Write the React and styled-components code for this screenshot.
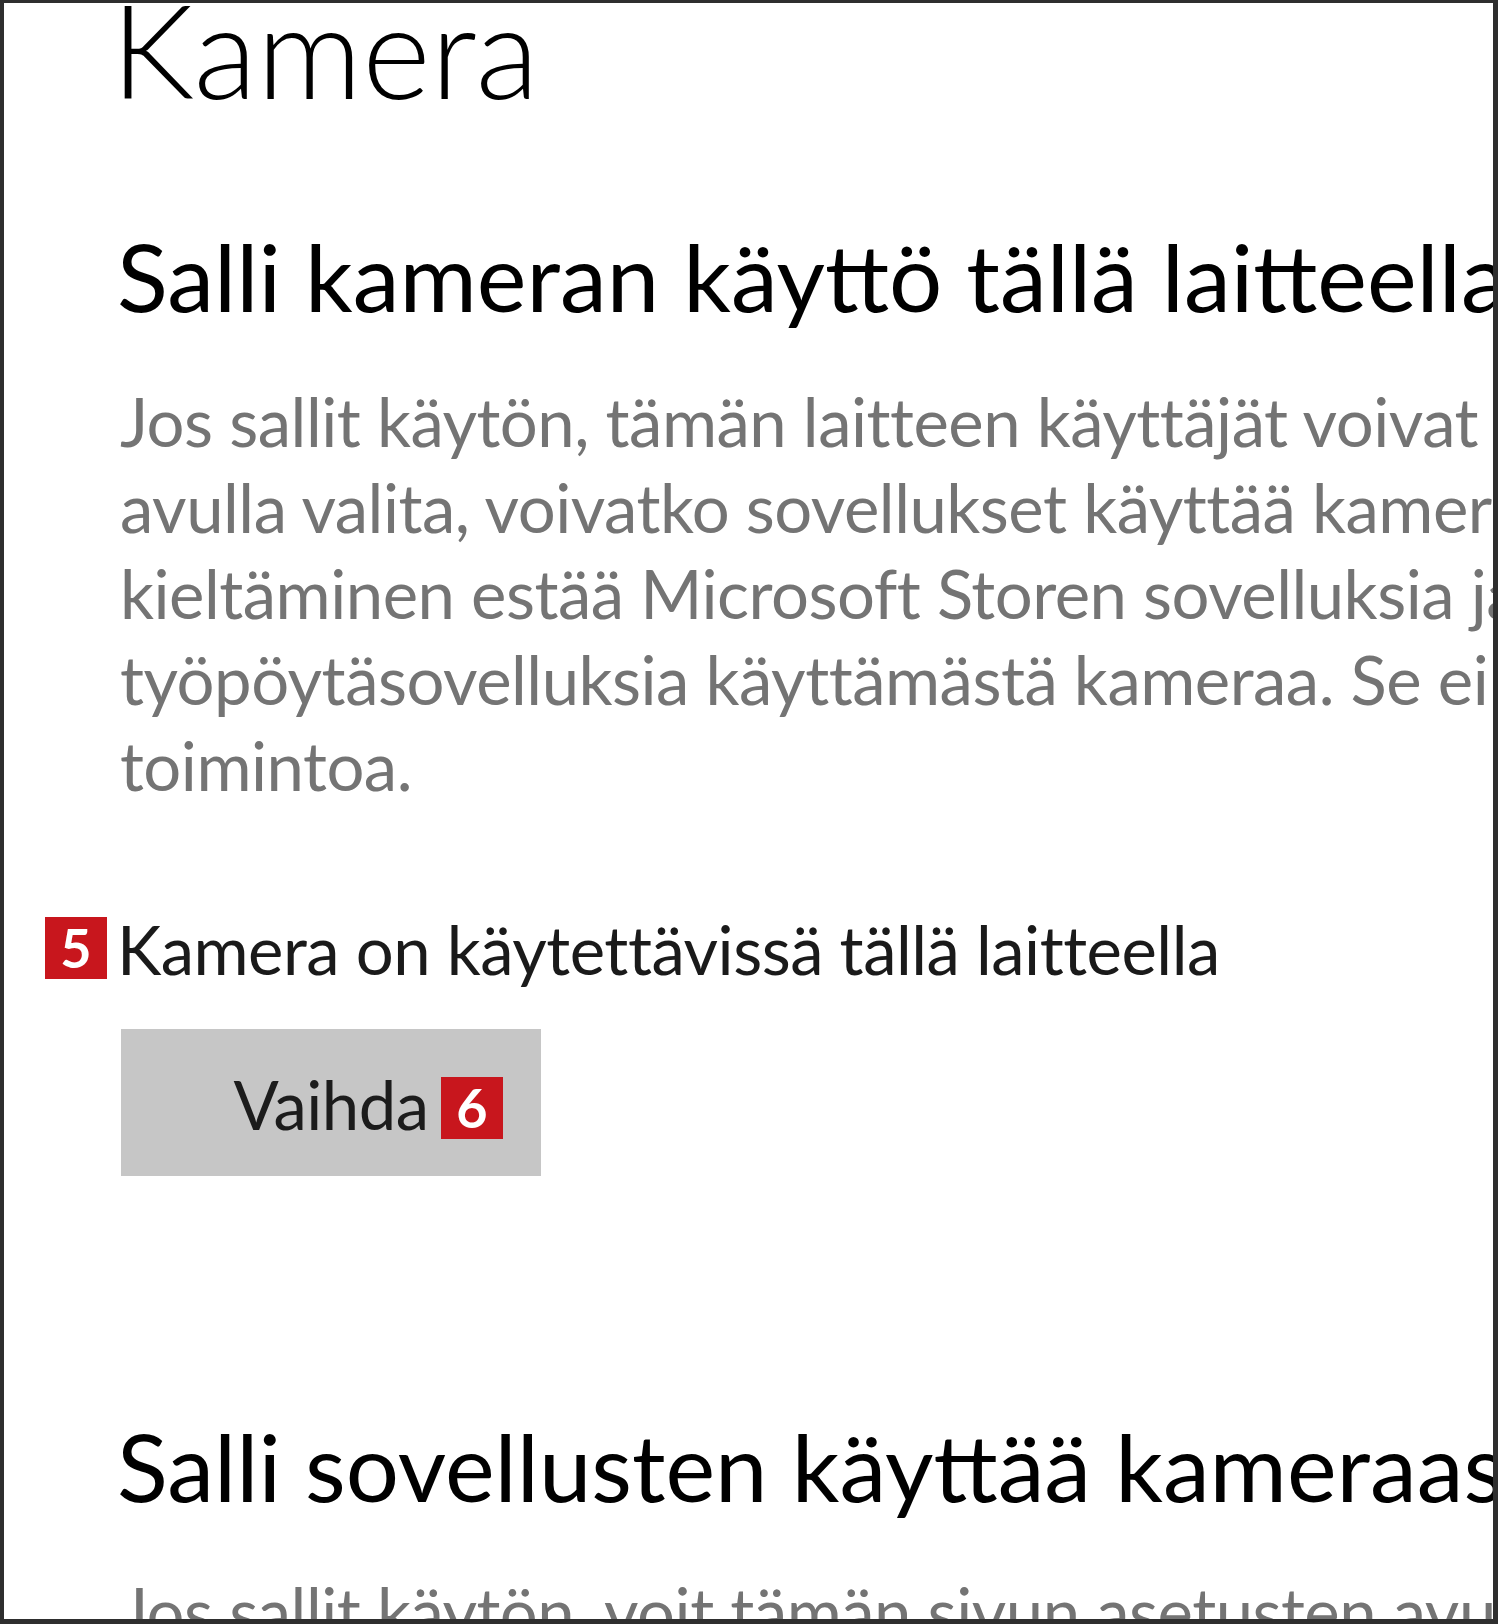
import React from "react";
import styled, { createGlobalStyle } from "styled-components";

const Global = createGlobalStyle`
  html, body { margin: 0; padding: 0; background: #ffffff; }
  body { font-family: Lato, "Open Sans", sans-serif; }
`;

const Frame = styled.div`
  box-sizing: border-box;
  width: 1498px;
  height: 1624px;
  border-style: solid;
  border-color: #2e2e2e;
  border-width: 3px 5px 5px 4px;
  background: #ffffff;
  overflow: hidden;
  padding-left: 113px;
`;

const Title = styled.h1`
  margin: 0 0 0 -6px;
  font-family: Lato, sans-serif;
  font-weight: 300;
  font-size: 131px;
  line-height: 92px;
  color: #000;
  white-space: nowrap;
`;

const Heading = styled.h2`
  margin: ${(p) => p.$top}px 0 0 0;
  font-family: Lato, sans-serif;
  font-weight: 400;
  font-size: 94px;
  line-height: 120px;
  color: #000;
  white-space: nowrap;
`;

const Description = styled.p`
  margin: ${(p) => p.$top}px 0 0 3px;
  font-family: Lato, sans-serif;
  font-weight: 400;
  font-size: 67px;
  line-height: 86px;
  letter-spacing: -0.5px;
  color: #747474;
`;

const Line = styled.span`
  display: block;
  white-space: nowrap;
`;

const SettingLabel = styled.div`
  position: relative;
  margin-top: 98px;
  font-family: Lato, sans-serif;
  font-size: 67px;
  line-height: 86px;
  letter-spacing: -0.5px;
  color: #1a1a1a;
  white-space: nowrap;
`;

const Badge = styled.span`
  position: absolute;
  left: ${(p) => p.$left}px;
  top: ${(p) => p.$top}px;
  width: 62px;
  height: 62px;
  background: #c8161d;
  color: #ffffff;
  font-family: Lato, sans-serif;
  font-weight: 700;
  font-size: 54px;
  line-height: 62px;
  letter-spacing: 0;
  text-align: center;
`;

const Button = styled.div`
  position: relative;
  margin: 37px 0 0 4px;
  width: 420px;
  height: 147px;
  background: #c6c6c6;
  display: flex;
  align-items: center;
  justify-content: center;
  box-sizing: border-box;
  padding-top: 3px;
  font-family: Lato, sans-serif;
  font-size: 67px;
  line-height: 86px;
  letter-spacing: -0.5px;
  color: #1c1c1c;
`;

export default function App() {
  return (
    <>
      <Global />
      <Frame>
        <Title>Kamera</Title>
        <Heading $top={121}>Salli kameran käyttö tällä laitteella</Heading>
        <Description $top={42}>
          <Line>Jos sallit käytön, tämän laitteen käyttäjät voivat tämän sivun asetusten</Line>
          <Line>avulla valita, voivatko sovellukset käyttää kameraa. Käytön</Line>
          <Line>kieltäminen estää Microsoft Storen sovelluksia ja useimpia</Line>
          <Line>työpöytäsovelluksia käyttämästä kameraa. Se ei estä Windows Hello -</Line>
          <Line>toimintoa.</Line>
        </Description>
        <SettingLabel>
          <Badge $left={-72} $top={11}>5</Badge>
          Kamera on käytettävissä tällä laitteella
        </SettingLabel>
        <Button>
          Vaihda
          <Badge $left={320} $top={48}>6</Badge>
        </Button>
        <Heading $top={230}>Salli sovellusten käyttää kameraasi</Heading>
        <Description $top={42}>
          <Line>Jos sallit käytön, voit tämän sivun asetusten avulla valita, mitkä</Line>
        </Description>
      </Frame>
    </>
  );
}
